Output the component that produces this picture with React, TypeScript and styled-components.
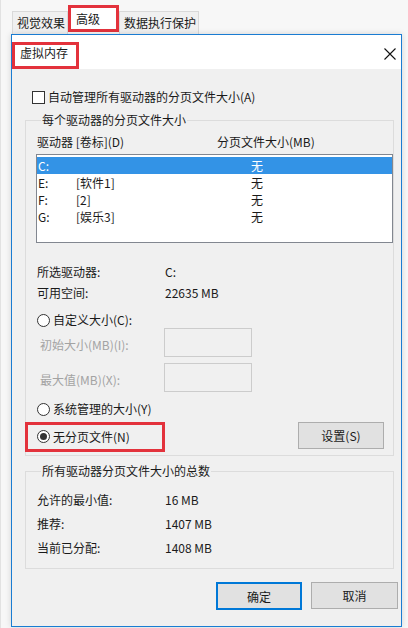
import styled, { createGlobalStyle } from "styled-components";

const GlobalStyle = createGlobalStyle`
  html, body {
    margin: 0;
    padding: 0;
    background: #f7f7f7;
  }
  body {
    font-family: "Noto Sans CJK SC", "Liberation Sans", sans-serif;
    font-size: 12px;
    color: #1a1a1a;
  }
  * {
    box-sizing: border-box;
  }
`;

const RED = "#e3323c";

const Screen = styled.div`
  width: 408px;
  height: 628px;
  overflow: hidden;
  display: flex;
  flex-direction: column;
  background: #f7f7f7;
  border-left: 1px solid #e2e2e2;
`;

const TabStrip = styled.div`
  height: 34px;
  display: flex;
  align-items: flex-end;
  padding-left: 11px;
`;

const Tab = styled.div<{ $active?: boolean }>`
  height: ${(p) => (p.$active ? "27px" : "23px")};
  margin-bottom: ${(p) => (p.$active ? "2px" : "0")};
  padding: ${(p) => (p.$active ? "0 16px 0 5px" : "0 2px 0 4px")};
  display: flex;
  align-items: ${(p) => (p.$active ? "flex-start" : "center")};
  line-height: ${(p) => (p.$active ? "22px" : "16px")};
  background: ${(p) => (p.$active ? "#ffffff" : "#f0f0f0")};
  border: ${(p) => (p.$active ? `3px solid ${RED}` : "1px solid #d9d9d9")};
  border-bottom: ${(p) => (p.$active ? `3px solid ${RED}` : "none")};
  font-size: 12px;
  white-space: nowrap;
`;

const Dialog = styled.div`
  margin-left: 10px;
  width: 391px;
  height: 593px;
  border: 1px solid #1a7cd2;
  background: #f0f0f0;
  display: flex;
  flex-direction: column;
  box-shadow: 0 0 6px rgba(0, 0, 0, 0.15);
`;

const TitleBar = styled.div`
  height: 34px;
  background: #ffffff;
  display: flex;
  align-items: flex-start;
`;

const TitleMark = styled.div`
  margin-top: 7px;
  height: 27px;
  padding: 1px 8px 0 5px;
  border: 3px solid ${RED};
  line-height: 14px;
  font-size: 12px;
`;

const Close = styled.svg`
  margin: 13px 5px 0 auto;
  width: 12px;
  height: 12px;
`;

const Body = styled.div`
  flex: 1;
  display: flex;
  flex-direction: column;
  padding: 0 0 0 13px;
`;

const Line = styled.div<{ $muted?: boolean }>`
  display: flex;
  align-items: center;
  height: 16px;
  line-height: 16px;
  white-space: nowrap;
  color: ${(p) => (p.$muted ? "#a3a3a3" : "#1a1a1a")};
`;

const CheckRow = styled(Line)`
  margin: 20px 0 0 7px;
  gap: 3px;
`;

const CheckBox = styled.span`
  width: 13px;
  height: 13px;
  border: 1px solid #333;
  background: #fff;
`;

const Group = styled.fieldset<{ $gap?: number; $bottom: number }>`
  margin: ${(p) => p.$gap ?? 7}px 0 0 0;
  width: 369px;
  padding: 0 0 ${(p) => p.$bottom}px 10px;
  border: 1px solid #dcdcdc;
  min-width: 0;
`;

const Legend = styled.legend`
  padding: 0 1px;
  margin-left: 5px;
  line-height: 16px;
  font-size: 12px;
`;

const Header = styled.div`
  margin-top: 6px;
  display: grid;
  grid-template-columns: 180px 1fr;
  padding-left: 1px;
  line-height: 16px;
`;

const ListBox = styled.div`
  margin-top: 4px;
  width: 357px;
  height: 89px;
  border: 1px solid #828790;
  background: #ffffff;
  padding-top: 2px;
`;

const ListRow = styled.div<{ $selected?: boolean }>`
  display: grid;
  grid-template-columns: 38px 175px 1fr;
  height: 17px;
  line-height: 17px;
  padding-left: 1px;
  background: ${(p) => (p.$selected ? "#3393e6" : "transparent")};
  color: ${(p) => (p.$selected ? "#ffffff" : "#1a1a1a")};
`;

const InfoList = styled.div<{ $top: number; $gap: number }>`
  margin-top: ${(p) => p.$top}px;
  display: flex;
  flex-direction: column;
  gap: ${(p) => p.$gap}px;
`;

const InfoRow = styled(Line)`
  padding-left: 1px;
`;

const InfoLabel = styled.span`
  width: 128px;
`;

const RadioRow = styled(Line)<{ $top: number }>`
  margin-top: ${(p) => p.$top}px;
  padding-left: 1px;
  gap: 3px;
`;

const Radio = styled.span<{ $on?: boolean }>`
  width: 13px;
  height: 13px;
  border-radius: 50%;
  border: 1px solid #333;
  background: #fff;
  display: flex;
  align-items: center;
  justify-content: center;

  &::after {
    content: "";
    width: 7px;
    height: 7px;
    border-radius: 50%;
    background: ${(p) => (p.$on ? "#333" : "transparent")};
  }
`;

const FieldRow = styled.div<{ $top: number }>`
  margin-top: ${(p) => p.$top}px;
  display: flex;
  align-items: center;
  height: 29px;
  padding-left: 4px;
`;

const FieldLabel = styled.span`
  width: 124px;
  color: #a3a3a3;
  padding-top: 4px;
  white-space: nowrap;
`;

const TextBox = styled.div`
  width: 88px;
  height: 29px;
  border: 1px solid #cccccc;
  background: #f0f0f0;
`;

const NoPageRow = styled.div`
  margin-top: 5px;
  display: flex;
  justify-content: space-between;
  align-items: flex-start;
`;

const Marked = styled.div`
  margin-left: -11px;
  width: 140px;
  height: 30px;
  border: 3px solid ${RED};
  padding: 0 0 2px 9px;
  display: flex;
  align-items: center;
  gap: 3px;
`;

const Button = styled.div<{ $primary?: boolean; $w?: number }>`
  width: ${(p) => p.$w ?? 86}px;
  height: ${(p) => (p.$primary ? 28 : 27)}px;
  display: flex;
  align-items: center;
  justify-content: center;
  background: #e1e1e1;
  border: ${(p) => (p.$primary ? "2px solid #0078d7" : "1px solid #adadad")};
  font-size: 12px;
`;

const SetButton = styled(Button)`
  margin-right: 9px;
`;

const Footer = styled.div`
  margin-top: 13px;
  display: flex;
  justify-content: flex-end;
  gap: 9px;
  padding-right: 3px;
`;

const drives = [
  { id: "C:", label: "", size: "无" },
  { id: "E:", label: "[软件1]", size: "无" },
  { id: "F:", label: "[2]", size: "无" },
  { id: "G:", label: "[娱乐3]", size: "无" },
];

export default function App() {
  return (
    <>
      <GlobalStyle />
      <Screen>
        <TabStrip>
          <Tab>视觉效果</Tab>
          <Tab $active>高级</Tab>
          <Tab>数据执行保护</Tab>
        </TabStrip>
        <Dialog>
          <TitleBar>
            <TitleMark>虚拟内存</TitleMark>
            <Close viewBox="0 0 12 12">
              <path d="M0.5 0.5 L11.5 11.5 M11.5 0.5 L0.5 11.5" stroke="#111" strokeWidth="1.1" fill="none" />
            </Close>
          </TitleBar>
          <Body>
            <CheckRow>
              <CheckBox />
              自动管理所有驱动器的分页文件大小(A)
            </CheckRow>

            <Group $bottom={3}>
              <Legend>每个驱动器的分页文件大小</Legend>
              <Header>
                <span>驱动器 [卷标](D)</span>
                <span>分页文件大小(MB)</span>
              </Header>
              <ListBox>
                {drives.map((d, i) => (
                  <ListRow key={d.id} $selected={i === 0}>
                    <span>{d.id}</span>
                    <span>{d.label}</span>
                    <span>{d.size}</span>
                  </ListRow>
                ))}
              </ListBox>

              <InfoList $top={21} $gap={5}>
                <InfoRow>
                  <InfoLabel>所选驱动器:</InfoLabel>
                  C:
                </InfoRow>
                <InfoRow>
                  <InfoLabel>可用空间:</InfoLabel>
                  22635 MB
                </InfoRow>
              </InfoList>

              <RadioRow $top={11}>
                <Radio />
                自定义大小(C):
              </RadioRow>
              <FieldRow $top={0}>
                <FieldLabel>初始大小(MB)(I):</FieldLabel>
                <TextBox />
              </FieldRow>
              <FieldRow $top={6}>
                <FieldLabel>最大值(MB)(X):</FieldLabel>
                <TextBox />
              </FieldRow>

              <RadioRow $top={9}>
                <Radio />
                系统管理的大小(Y)
              </RadioRow>
              <NoPageRow>
                <Marked>
                  <Radio $on />
                  无分页文件(N)
                </Marked>
                <SetButton>设置(S)</SetButton>
              </NoPageRow>
            </Group>

            <Group $bottom={12}>
              <Legend>所有驱动器分页文件大小的总数</Legend>
              <InfoList $top={13} $gap={8}>
                <InfoRow>
                  <InfoLabel>允许的最小值:</InfoLabel>
                  16 MB
                </InfoRow>
                <InfoRow>
                  <InfoLabel>推荐:</InfoLabel>
                  1407 MB
                </InfoRow>
                <InfoRow>
                  <InfoLabel>当前已分配:</InfoLabel>
                  1408 MB
                </InfoRow>
              </InfoList>
            </Group>

            <Footer>
              <Button $primary>确定</Button>
              <Button $w={87}>取消</Button>
            </Footer>
          </Body>
        </Dialog>
      </Screen>
    </>
  );
}
